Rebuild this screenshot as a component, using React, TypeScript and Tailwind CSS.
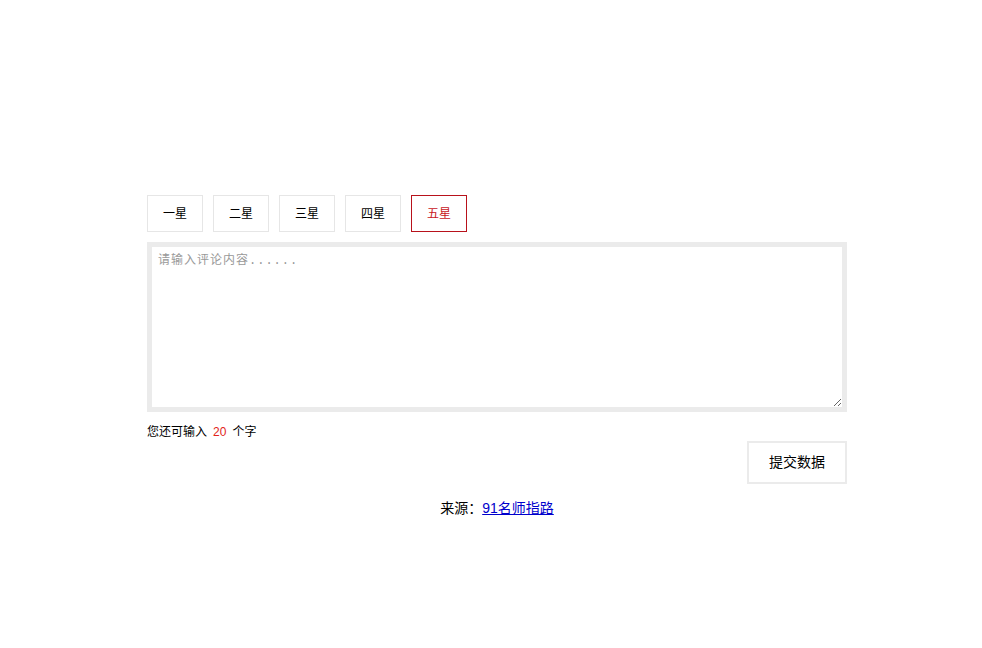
import { useState } from "react";

const STARS = ["一星", "二星", "三星", "四星", "五星"];

export default function App() {
  const [active, setActive] = useState(4);
  const [text, setText] = useState("");
  const max = 20;

  return (
    <div className="min-h-[648px] w-full bg-white font-['Liberation_Sans','Noto_Sans_CJK_SC',sans-serif] text-[12px] text-black">
      <div className="ml-[147px] w-[700px] pt-[195px]">
        {/* Star selector */}
        <div className="flex gap-[10px]">
          {STARS.map((s, i) => (
            <button
              key={s}
              onClick={() => setActive(i)}
              className={
                i === active
                  ? "flex h-[37px] w-[56px] items-center justify-center border border-[#b8121b] bg-white text-[12px] text-[#c8161d]"
                  : "flex h-[37px] w-[56px] items-center justify-center border border-[#e6e6e6] bg-white text-[12px] text-black"
              }
            >
              {s}
            </button>
          ))}
        </div>

        {/* Comment box */}
        <textarea
          value={text}
          maxLength={max}
          onChange={(e) => setText(e.target.value)}
          placeholder="请输入评论内容......"
          className="mt-[10px] block h-[170px] w-[700px] border-[5px] border-[#ebebeb] px-[6px] py-[6px] font-['Liberation_Mono','Noto_Sans_CJK_SC',monospace] text-[12px] leading-[16px] tracking-[1px] outline-none placeholder:text-[#999]"
        />

        <div className="mt-[12px] flex items-center text-[12px] leading-[16px]">
          您还可输入
          <span className="mx-[6px] text-[#e2231a]">{max - text.length}</span>
          个字
        </div>

        <div className="mt-[1px] flex justify-end">
          <button className="h-[43px] w-[100px] border-2 border-[#ebebeb] bg-white text-[14px] text-black">
            提交数据
          </button>
        </div>

        <div className="mt-[14px] text-center text-[14px] leading-[20px]">
          来源：
          <a href="#" className="text-[#00c] underline">
            91名师指路
          </a>
        </div>
      </div>
    </div>
  );
}
